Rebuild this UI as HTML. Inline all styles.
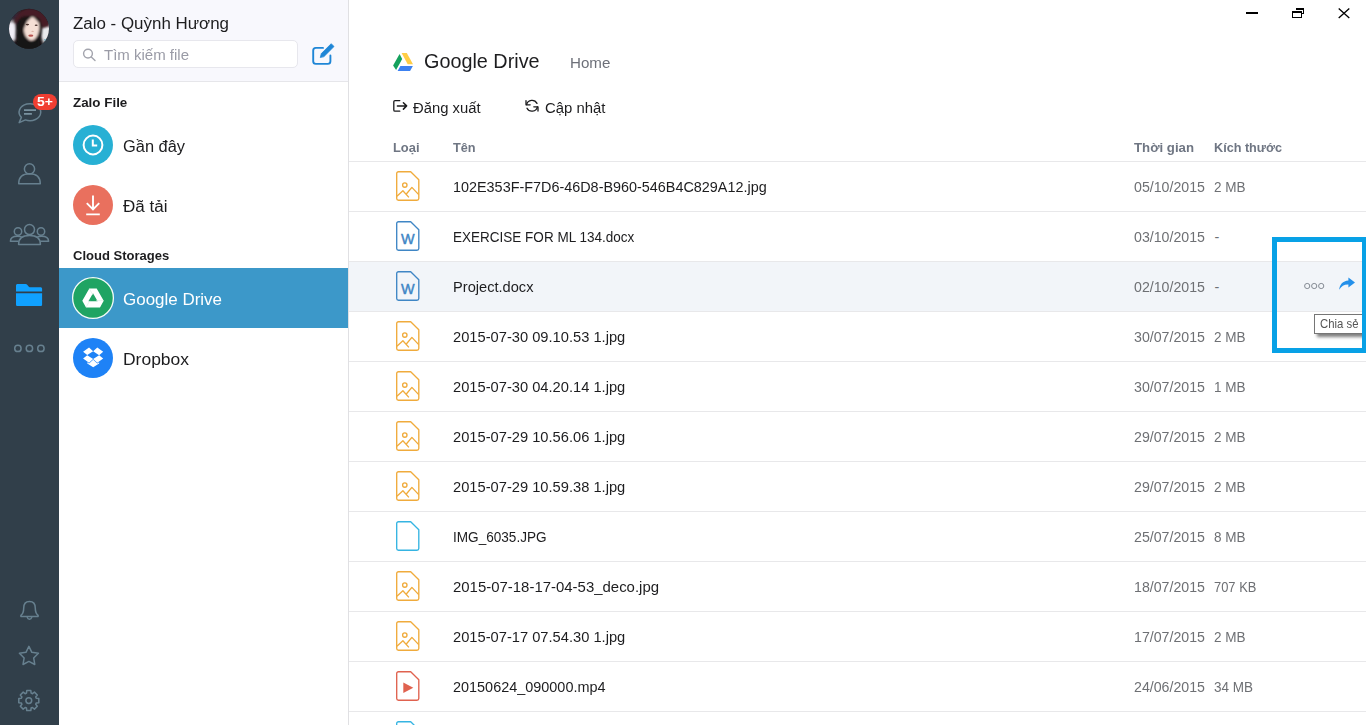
<!DOCTYPE html>
<html lang="vi"><head><meta charset="utf-8"><title>Zalo - Quỳnh Hương</title>
<style>
*{box-sizing:border-box;margin:0;padding:0}
html,body{width:1366px;height:725px;overflow:hidden;background:#fff}
body{font-family:"Liberation Sans",sans-serif}
#app{position:relative;width:1366px;height:725px;overflow:hidden;background:#fff}
#app div,#app span,#app svg{position:absolute}
.g{display:contents}
#app .g{position:static}
.side{left:0;top:0;width:59px;height:725px;background:#313f4a}
.panel{left:59px;top:0;width:289px;height:725px;background:#fff}
.phead{left:59px;top:0;width:289px;height:81px;background:#f8f8fd}
.pline{left:59px;top:81px;width:289px;height:1px;background:#e6e6ea}
.vline{left:348px;top:0;width:1px;height:725px;background:#e0e0e3}
.search{left:73px;top:40px;width:225px;height:28px;background:#fff;border:1px solid #e7e7ed;border-radius:5px}
.sel{left:59px;top:268px;width:289px;height:60px;background:#3c98c9}
.rowhi{left:349px;top:261px;width:1017px;height:50px;background:#f2f5f9}
.hl{left:349px;width:1017px;height:1px;background:#e8e8ea}
.t{white-space:pre;transform-origin:0 0;font-family:"Liberation Sans",sans-serif}
.fi{left:395px}
.badge{left:33px;top:94px;width:24px;height:16px;border-radius:8px;background:#f03e32}
.tip{left:1314px;top:314px;width:52px;height:20px;background:#fff;border:1px solid #767676;box-shadow:3px 3px 3px rgba(0,0,0,.5)}
.hbox{left:1272px;top:237px;width:95px;height:116px;border:5px solid #08a1e6}
svg{overflow:visible}
#ico{left:0;top:0}
</style></head>
<body>
<div id="app">
<div class="side"></div>
<div class="panel"></div>
<div class="phead"></div>
<div class="pline"></div>
<div class="vline"></div>
<div class="search"></div>
<div class="sel"></div>
<div class="rowhi"></div>
<div class="hl" style="top:161px"></div><div class="hl" style="top:211px"></div><div class="hl" style="top:261px"></div><div class="hl" style="top:311px"></div><div class="hl" style="top:361px"></div><div class="hl" style="top:411px"></div><div class="hl" style="top:461px"></div><div class="hl" style="top:511px"></div><div class="hl" style="top:561px"></div><div class="hl" style="top:611px"></div><div class="hl" style="top:661px"></div><div class="hl" style="top:711px"></div>
<svg id="ico" width="1366" height="725" viewBox="0 0 1366 725" fill="none">
<!-- avatar -->
<defs>
<clipPath id="avc"><circle cx="29" cy="28.8" r="20"/></clipPath>
<filter id="b1" x="-50%" y="-50%" width="200%" height="200%"><feGaussianBlur stdDeviation="1.0"/></filter><filter id="b3" x="-50%" y="-50%" width="200%" height="200%"><feGaussianBlur stdDeviation="1.5"/></filter><filter id="b2" x="-50%" y="-50%" width="200%" height="200%"><feGaussianBlur stdDeviation="0.7"/></filter>
</defs>
<g clip-path="url(#avc)">
<rect x="8" y="8" width="42" height="42" fill="#1b1518"/>
<g filter="url(#b3)">
<path d="M6 22L15 21.5L16.5 30L15.5 40L12 42L6 36Z" fill="#f1eff8"/>
<path d="M41 28.5L51 23L52 40L45 46L42.6 41L40.4 36.5Z" fill="#e9eaed"/>
<path d="M8 12L21 8.5L18 19L8 22Z" fill="#33293a"/>
</g>
<g filter="url(#b1)">
<path d="M14 22C16 13 22 8 31 8.4C41 9 48 15 50 26L42.5 27.5C40 20 36 17 30 16.6C24 16.6 19 18 16.5 23Z" fill="#471c26"/>
<path d="M18 22C20 17 25 15.5 31 16C37 16.5 41 20 41.5 27C42 33 40.5 40 39 44L44 50H12L17.6 40C16 34 16.4 27 18 22Z" fill="#191316"/>
<path d="M24.6 20C27 16.4 35.4 16 38.4 19.6C40 23 39.8 30 37.8 35C36 38.8 33.6 40.6 31.4 40.6C28.4 40.4 25.2 37 24.2 32C23.4 27.6 23.6 23 24.6 20Z" fill="#f5dfd5"/>
<path d="M21 17L32.5 16L27 21.4L24.2 28L23.2 38L19 30Z" fill="#1b1417"/>
<path d="M32.5 16L40 19L40.8 29L38.6 22.4Z" fill="#1b1417"/>
<path d="M25 40.4L31 42L38 39.4L40 50H20Z" fill="#191316"/>
</g>
<g filter="url(#b2)">
<ellipse cx="27.4" cy="24.6" rx="1.7" ry="0.8" fill="#4a332f"/>
<ellipse cx="36.2" cy="25.2" rx="1.5" ry="0.8" fill="#4a332f"/>
<ellipse cx="30.8" cy="35.6" rx="2.5" ry="1.2" fill="#b9524f"/>
<ellipse cx="32.6" cy="31.4" rx="1.2" ry="0.6" fill="#dcb4a6"/>
<rect x="44.2" y="39" width="1.8" height="1.8" fill="#7fb4c4"/>
</g>
</g>
<!-- sidebar icons -->
<g stroke="#67808f" stroke-width="1.5" stroke-linejoin="round" stroke-linecap="round">
<path d="M21.4 117.4A10.8 8.5 0 1 1 25.4 119.9L19.2 122.6Z"/>
<path d="M24 110.1H36M24 113.9H31.9" stroke="#7992a0" stroke-width="1.8" stroke-linecap="butt"/>
<circle cx="29.5" cy="168.9" r="5.1"/>
<path d="M18.7 183.8C18.7 177.2 23 173.8 29.5 173.8C36 173.8 40.3 177.2 40.3 183.8Z"/>
<circle cx="29.5" cy="229.6" r="5"/>
<path d="M18.6 244.4C18.6 238.6 23 235.6 29.5 235.6C36 235.6 40.4 238.6 40.4 244.4Z"/>
<circle cx="18" cy="231.5" r="3.7"/>
<circle cx="41" cy="231.5" r="3.7"/>
<path d="M18.2 241.2H10.4C10.4 238 13.4 236.2 17.5 236.2C19.3 236.2 20.8 236.6 21.8 237.2"/>
<path d="M40.8 241.2H48.6C48.6 238 45.6 236.2 41.5 236.2C39.7 236.2 38.2 236.6 37.2 237.2"/>
<circle cx="17.9" cy="348.4" r="3.2"/>
<circle cx="29.4" cy="348.4" r="3.2"/>
<circle cx="40.9" cy="348.4" r="3.2"/>
<!-- bell -->
<path d="M29.5 601.6C25.6 601.6 23.7 604.6 23.7 608.2C23.7 612.6 22.4 614.2 20.9 615.4V616.6H38.1V615.4C36.6 614.2 35.3 612.6 35.3 608.2C35.3 604.6 33.4 601.6 29.5 601.6Z"/>
<path d="M27.3 617.4C27.6 618.6 28.4 619.2 29.5 619.2C30.6 619.2 31.4 618.6 31.7 617.4"/>
<!-- star -->
<path d="M28.90 646.40L31.84 652.35L38.41 653.31L33.66 657.95L34.78 664.49L28.90 661.40L23.02 664.49L24.14 657.95L19.39 653.31L25.96 652.35Z"/>
<!-- gear -->
<circle cx="28.8" cy="700.6" r="2.9"/>
<path d="M26.49 693.15L26.77 690.60L30.83 690.60L31.11 693.15L32.44 693.70L34.44 692.10L37.30 694.96L35.70 696.96L36.25 698.29L38.80 698.57L38.80 702.63L36.25 702.91L35.70 704.24L37.30 706.24L34.44 709.10L32.44 707.50L31.11 708.05L30.83 710.60L26.77 710.60L26.49 708.05L25.16 707.50L23.16 709.10L20.30 706.24L21.90 704.24L21.35 702.91L18.80 702.63L18.80 698.57L21.35 698.29L21.90 696.96L20.30 694.96L23.16 692.10L25.16 693.70Z"/>
</g>
<!-- folder -->
<path d="M17.5 284H25.6C26.3 284 26.8 284.3 27.2 284.8L28.6 286.6C28.9 287 29.4 287.2 29.9 287.2H40.5C41.4 287.2 42.1 287.9 42.1 288.8V291.4H16V285.5C16 284.7 16.7 284 17.5 284Z" fill="#10a1ff"/>
<path d="M16 293.2H42.1V304.4C42.1 305.3 41.4 306 40.5 306H17.6C16.7 306 16 305.3 16 304.4Z" fill="#10a1ff"/>
<!-- search icon -->
<g stroke="#a3a4ad" stroke-width="1.4" stroke-linecap="round">
<circle cx="88" cy="53.6" r="4.4"/>
<path d="M91.3 57L95 60.6"/>
</g>
<!-- compose icon -->
<g stroke="#1f86d6" stroke-width="1.9" stroke-linejoin="round" stroke-linecap="round">
<path d="M323 47.9H315.8C314.3 47.9 313.2 49 313.2 50.5V61.3C313.2 62.8 314.3 63.9 315.8 63.9H327.8C329.3 63.9 330.4 62.8 330.4 61.3V55.4"/>
<path d="M320.4 57.2L321.3 53.6L331.2 43.7L334 46.5L324.1 56.4Z" fill="#1f86d6" stroke-width="0.8"/>
</g>
<!-- panel circles -->
<circle cx="93" cy="145" r="20" fill="#27b0d4"/>
<circle cx="93" cy="145" r="9.4" stroke="#fff" stroke-width="2"/>
<path d="M92.8 139.6V145.6H97.2" stroke="#fff" stroke-width="2"/>
<circle cx="93" cy="205" r="20" fill="#e9705e"/>
<path d="M93 195.6V208.8M86.8 203.2L93 209.4L99.2 203.2M86.2 214.4H99.8" stroke="#fff" stroke-width="1.9"/>
<circle cx="93" cy="298" r="20.4" fill="#1fa463" stroke="#f4fbf8" stroke-width="1.3"/>
<path d="M89.3 288.6H96.7L103.7 300.8L100 307.4H86L82.3 300.8Z M93 293.2L88.4 301.2H97.6Z" fill="#fff" fill-rule="evenodd"/><path d="M89.4 288.8L93 295M103.4 300.6H96M86.2 306.9L89.8 300.8" stroke="#d6eee2" stroke-width="0.6"/>
<circle cx="93" cy="358" r="20" fill="#1e82f6"/>
<path transform="translate(83.1 347.6) scale(0.474 0.5)" fill="#fff" d="M12.5 0L0 8.1l8.7 6.9 12.5-7.8L12.5 0z M0 21.9l12.5 8.2 8.7-7.3-12.5-7.7L0 21.9z M21.2 22.8l8.8 7.3 12.4-8.1-8.6-6.9-12.6 7.7z M42.4 8.1L30 0l-8.8 7.3 12.6 7.8 8.6-7z M21.3 24.4l-8.8 7.3-3.7-2.5v2.8l12.5 7.5 12.5-7.5v-2.8l-3.8 2.5-8.7-7.3z"/>
<!-- drive logo -->
<path d="M401.6 53.1H406.8L413 64.3H407.7Z" fill="#ffcd45"/>
<path d="M399.6 54.1L402.2 59L396.1 69.9L393.1 65.4Z" fill="#14a15d"/>
<path d="M400.4 66.1H412.9L410.1 70.9H397.6Z" fill="#3c81f1"/>
<!-- logout icon -->
<g stroke="#1b1b1d" stroke-width="1.3" stroke-linecap="round" stroke-linejoin="round">
<path d="M399.8 100.6H395C394.3 100.6 393.8 101.1 393.8 101.8V110C393.8 110.7 394.3 111.2 395 111.2H399.8"/>
<path d="M397.4 105.9H406.4M403.4 102.7L406.6 105.9L403.4 109.1" stroke-width="1.5"/>
</g>
<!-- refresh icon -->
<g stroke="#1b1b1d" stroke-width="1.3" stroke-linecap="round" stroke-linejoin="round">
<path d="M526.6 104.6A5.6 5.6 0 0 1 537 103.4"/>
<path d="M537.4 106.8A5.6 5.6 0 0 1 527 108.2"/>
<path d="M526 100.6V104.8H530.2"/>
<path d="M538 111V106.8H533.8"/>
</g>
<!-- window controls -->
<rect x="1246" y="12" width="12" height="2" fill="#000"/>
<rect x="1296" y="8" width="8" height="2" fill="#000"/>
<rect x="1303" y="8" width="1" height="6" fill="#000"/>
<rect x="1302" y="13" width="2" height="1" fill="#000"/>
<rect x="1292" y="11" width="10" height="2" fill="#000"/>
<rect x="1292" y="11" width="1" height="7" fill="#000"/>
<rect x="1301" y="11" width="1" height="7" fill="#000"/>
<rect x="1292" y="17" width="10" height="1" fill="#000"/>
<path d="M1338.7 8.4L1349.3 18M1349.3 8.4L1338.7 18" stroke="#000" stroke-width="1.3"/>
<!-- row actions -->
<g stroke="#858b94" stroke-width="1">
<circle cx="1307.2" cy="286" r="2.6"/>
<circle cx="1314.2" cy="286" r="2.6"/>
<circle cx="1321.2" cy="286" r="2.6"/>
</g>
<path d="M1348.4 277.6L1355 282.6L1348.4 287.6V284.6C1344.4 284.4 1341.4 286 1339.2 289.8C1339.6 284.4 1342.8 280.8 1348.4 280.4Z" fill="#2490ea"/>
</svg>
<svg class="fi" style="top:171px" width="25" height="31" viewBox="-0.5 0 25 31" fill="none" stroke="#f0ab3c" stroke-width="1.35" stroke-linejoin="round"><path d="M3 0.7H15.2L23.3 8.8V27.4C23.3 28.4 22.5 29.2 21.5 29.2H3C2 29.2 1.2 28.4 1.2 27.4V2.5C1.2 1.5 2 0.7 3 0.7Z"/><circle cx="9.3" cy="14" r="2.2"/><path d="M1.4 25.2L7.4 19.8L13.4 26.4M10.6 23.2L16.4 16.4L23.2 23.6"/></svg><svg class="fi" style="top:221px" width="25" height="31" viewBox="-0.5 0 25 31" fill="none" stroke="#3f86c5" stroke-width="1.35" stroke-linejoin="round"><path d="M3 0.7H15.2L23.3 8.8V27.4C23.3 28.4 22.5 29.2 21.5 29.2H3C2 29.2 1.2 28.4 1.2 27.4V2.5C1.2 1.5 2 0.7 3 0.7Z"/><text x="12.3" y="22.6" text-anchor="middle" font-family="Liberation Sans, sans-serif" font-size="14.4" fill="#3f86c5" stroke="#3f86c5" stroke-width="0.45">W</text></svg><svg class="fi" style="top:271px" width="25" height="31" viewBox="-0.5 0 25 31" fill="none" stroke="#3f86c5" stroke-width="1.35" stroke-linejoin="round"><path d="M3 0.7H15.2L23.3 8.8V27.4C23.3 28.4 22.5 29.2 21.5 29.2H3C2 29.2 1.2 28.4 1.2 27.4V2.5C1.2 1.5 2 0.7 3 0.7Z"/><text x="12.3" y="22.6" text-anchor="middle" font-family="Liberation Sans, sans-serif" font-size="14.4" fill="#3f86c5" stroke="#3f86c5" stroke-width="0.45">W</text></svg><svg class="fi" style="top:321px" width="25" height="31" viewBox="-0.5 0 25 31" fill="none" stroke="#f0ab3c" stroke-width="1.35" stroke-linejoin="round"><path d="M3 0.7H15.2L23.3 8.8V27.4C23.3 28.4 22.5 29.2 21.5 29.2H3C2 29.2 1.2 28.4 1.2 27.4V2.5C1.2 1.5 2 0.7 3 0.7Z"/><circle cx="9.3" cy="14" r="2.2"/><path d="M1.4 25.2L7.4 19.8L13.4 26.4M10.6 23.2L16.4 16.4L23.2 23.6"/></svg><svg class="fi" style="top:371px" width="25" height="31" viewBox="-0.5 0 25 31" fill="none" stroke="#f0ab3c" stroke-width="1.35" stroke-linejoin="round"><path d="M3 0.7H15.2L23.3 8.8V27.4C23.3 28.4 22.5 29.2 21.5 29.2H3C2 29.2 1.2 28.4 1.2 27.4V2.5C1.2 1.5 2 0.7 3 0.7Z"/><circle cx="9.3" cy="14" r="2.2"/><path d="M1.4 25.2L7.4 19.8L13.4 26.4M10.6 23.2L16.4 16.4L23.2 23.6"/></svg><svg class="fi" style="top:421px" width="25" height="31" viewBox="-0.5 0 25 31" fill="none" stroke="#f0ab3c" stroke-width="1.35" stroke-linejoin="round"><path d="M3 0.7H15.2L23.3 8.8V27.4C23.3 28.4 22.5 29.2 21.5 29.2H3C2 29.2 1.2 28.4 1.2 27.4V2.5C1.2 1.5 2 0.7 3 0.7Z"/><circle cx="9.3" cy="14" r="2.2"/><path d="M1.4 25.2L7.4 19.8L13.4 26.4M10.6 23.2L16.4 16.4L23.2 23.6"/></svg><svg class="fi" style="top:471px" width="25" height="31" viewBox="-0.5 0 25 31" fill="none" stroke="#f0ab3c" stroke-width="1.35" stroke-linejoin="round"><path d="M3 0.7H15.2L23.3 8.8V27.4C23.3 28.4 22.5 29.2 21.5 29.2H3C2 29.2 1.2 28.4 1.2 27.4V2.5C1.2 1.5 2 0.7 3 0.7Z"/><circle cx="9.3" cy="14" r="2.2"/><path d="M1.4 25.2L7.4 19.8L13.4 26.4M10.6 23.2L16.4 16.4L23.2 23.6"/></svg><svg class="fi" style="top:521px" width="25" height="31" viewBox="-0.5 0 25 31" fill="none" stroke="#35b4e2" stroke-width="1.35" stroke-linejoin="round"><path d="M3 0.7H15.2L23.3 8.8V27.4C23.3 28.4 22.5 29.2 21.5 29.2H3C2 29.2 1.2 28.4 1.2 27.4V2.5C1.2 1.5 2 0.7 3 0.7Z"/></svg><svg class="fi" style="top:571px" width="25" height="31" viewBox="-0.5 0 25 31" fill="none" stroke="#f0ab3c" stroke-width="1.35" stroke-linejoin="round"><path d="M3 0.7H15.2L23.3 8.8V27.4C23.3 28.4 22.5 29.2 21.5 29.2H3C2 29.2 1.2 28.4 1.2 27.4V2.5C1.2 1.5 2 0.7 3 0.7Z"/><circle cx="9.3" cy="14" r="2.2"/><path d="M1.4 25.2L7.4 19.8L13.4 26.4M10.6 23.2L16.4 16.4L23.2 23.6"/></svg><svg class="fi" style="top:621px" width="25" height="31" viewBox="-0.5 0 25 31" fill="none" stroke="#f0ab3c" stroke-width="1.35" stroke-linejoin="round"><path d="M3 0.7H15.2L23.3 8.8V27.4C23.3 28.4 22.5 29.2 21.5 29.2H3C2 29.2 1.2 28.4 1.2 27.4V2.5C1.2 1.5 2 0.7 3 0.7Z"/><circle cx="9.3" cy="14" r="2.2"/><path d="M1.4 25.2L7.4 19.8L13.4 26.4M10.6 23.2L16.4 16.4L23.2 23.6"/></svg><svg class="fi" style="top:671px" width="25" height="31" viewBox="-0.5 0 25 31" fill="none" stroke="#e0624f" stroke-width="1.35" stroke-linejoin="round"><path d="M3 0.7H15.2L23.3 8.8V27.4C23.3 28.4 22.5 29.2 21.5 29.2H3C2 29.2 1.2 28.4 1.2 27.4V2.5C1.2 1.5 2 0.7 3 0.7Z"/><path d="M7.8 11.6L17.8 16.8L7.8 22Z" fill="#e0624f" stroke="none"/></svg><svg class="fi" style="top:721px" width="25" height="31" viewBox="-0.5 0 25 31" fill="none" stroke="#35b4e2" stroke-width="1.35" stroke-linejoin="round"><path d="M3 0.7H15.2L23.3 8.8V27.4C23.3 28.4 22.5 29.2 21.5 29.2H3C2 29.2 1.2 28.4 1.2 27.4V2.5C1.2 1.5 2 0.7 3 0.7Z"/></svg>
<nav class="g sidebar">
<div class="badge"></div>
<span class="t" style="left:37.20px;top:94px;font-size:12px;line-height:16px;color:#ffffff;font-weight:700;transform:scaleX(1.1616);">5+</span>
</nav>
<aside class="g filepanel">
<span class="t" style="left:73.00px;top:12px;font-size:17.3px;line-height:22px;color:#1d1d1f;transform:scaleX(0.9793);">Zalo - Quỳnh Hương</span>
<span class="t" style="left:104.40px;top:45px;font-size:15.5px;line-height:20px;color:#9a9ba6;transform:scaleX(0.9676);">Tìm kiếm file</span>
<span class="t" style="left:73.00px;top:94px;font-size:13.3px;line-height:17px;color:#1d1d1f;font-weight:700;transform:scaleX(1.0067);">Zalo File</span>
<span class="t" style="left:123.00px;top:135px;font-size:17.3px;line-height:22px;color:#1d1d1f;transform:scaleX(0.9491);">Gần đây</span>
<span class="t" style="left:123.30px;top:195px;font-size:17.3px;line-height:22px;color:#1d1d1f;transform:scaleX(0.9855);">Đã tải</span>
<span class="t" style="left:73.00px;top:247px;font-size:13.3px;line-height:17px;color:#1d1d1f;font-weight:700;transform:scaleX(0.9800);">Cloud Storages</span>
<span class="t" style="left:123.00px;top:288px;font-size:17.3px;line-height:22px;color:#ffffff;transform:scaleX(0.9816);">Google Drive</span>
<span class="t" style="left:123.00px;top:348px;font-size:17.3px;line-height:22px;color:#1d1d1f;transform:scaleX(1.0103);">Dropbox</span>
</aside>
<main class="g content">
<header class="g">
<span class="t" style="left:424.00px;top:48px;font-size:20.2px;line-height:26px;color:#1d1d1f;transform:scaleX(0.9811);">Google Drive</span>
<span class="t" style="left:570.00px;top:53px;font-size:15.5px;line-height:20px;color:#6d7079;transform:scaleX(0.9768);">Home</span>
<span class="t" style="left:413.30px;top:98px;font-size:15.5px;line-height:20px;color:#1d1d1f;transform:scaleX(0.9565);">Đăng xuất</span>
<span class="t" style="left:545.20px;top:98px;font-size:15.5px;line-height:20px;color:#1d1d1f;transform:scaleX(0.9599);">Cập nhật</span>
</header>
<section class="g filelist">
<div class="g listhead">
<span class="t" style="left:393.30px;top:139px;font-size:13.3px;line-height:17px;color:#6f7683;font-weight:700;transform:scaleX(0.9691);">Loại</span>
<span class="t" style="left:453.00px;top:139px;font-size:13.3px;line-height:17px;color:#6f7683;font-weight:700;transform:scaleX(0.9560);">Tên</span>
<span class="t" style="left:1134.40px;top:139px;font-size:13.3px;line-height:17px;color:#6f7683;font-weight:700;transform:scaleX(0.9930);">Thời gian</span>
<span class="t" style="left:1214.30px;top:139px;font-size:13.3px;line-height:17px;color:#6f7683;font-weight:700;transform:scaleX(0.9504);">Kích thước</span>
</div>
<div class="g row">
<span class="t" style="left:453.20px;top:177px;font-size:15.5px;line-height:20px;color:#1d1d1f;transform:scaleX(0.9287);">102E353F-F7D6-46D8-B960-546B4C829A12.jpg</span>
<span class="t" style="left:1134.30px;top:178px;font-size:14.4px;line-height:19px;color:#6e7074;transform:scaleX(0.9857);">05/10/2015</span>
<span class="t" style="left:1214.40px;top:178px;font-size:14.4px;line-height:19px;color:#6e7074;transform:scaleX(0.9407);">2 MB</span>
</div>
<div class="g row">
<span class="t" style="left:453.20px;top:227px;font-size:15.5px;line-height:20px;color:#1d1d1f;transform:scaleX(0.8721);">EXERCISE FOR ML 134.docx</span>
<span class="t" style="left:1134.30px;top:228px;font-size:14.4px;line-height:19px;color:#6e7074;transform:scaleX(0.9857);">03/10/2015</span>
<span class="t" style="left:1214.40px;top:228px;font-size:14.4px;line-height:19px;color:#6e7074;">-</span>
</div>
<div class="g row">
<span class="t" style="left:453.20px;top:277px;font-size:15.5px;line-height:20px;color:#1d1d1f;transform:scaleX(0.9438);">Project.docx</span>
<span class="t" style="left:1134.30px;top:278px;font-size:14.4px;line-height:19px;color:#6e7074;transform:scaleX(0.9857);">02/10/2015</span>
<span class="t" style="left:1214.40px;top:278px;font-size:14.4px;line-height:19px;color:#6e7074;">-</span>
</div>
<div class="g row">
<span class="t" style="left:453.20px;top:327px;font-size:15.5px;line-height:20px;color:#1d1d1f;transform:scaleX(0.9474);">2015-07-30 09.10.53 1.jpg</span>
<span class="t" style="left:1134.30px;top:328px;font-size:14.4px;line-height:19px;color:#6e7074;transform:scaleX(0.9857);">30/07/2015</span>
<span class="t" style="left:1214.40px;top:328px;font-size:14.4px;line-height:19px;color:#6e7074;transform:scaleX(0.9407);">2 MB</span>
</div>
<div class="g row">
<span class="t" style="left:453.20px;top:377px;font-size:15.5px;line-height:20px;color:#1d1d1f;transform:scaleX(0.9474);">2015-07-30 04.20.14 1.jpg</span>
<span class="t" style="left:1134.30px;top:378px;font-size:14.4px;line-height:19px;color:#6e7074;transform:scaleX(0.9857);">30/07/2015</span>
<span class="t" style="left:1214.40px;top:378px;font-size:14.4px;line-height:19px;color:#6e7074;transform:scaleX(0.9407);">1 MB</span>
</div>
<div class="g row">
<span class="t" style="left:453.20px;top:427px;font-size:15.5px;line-height:20px;color:#1d1d1f;transform:scaleX(0.9474);">2015-07-29 10.56.06 1.jpg</span>
<span class="t" style="left:1134.30px;top:428px;font-size:14.4px;line-height:19px;color:#6e7074;transform:scaleX(0.9857);">29/07/2015</span>
<span class="t" style="left:1214.40px;top:428px;font-size:14.4px;line-height:19px;color:#6e7074;transform:scaleX(0.9407);">2 MB</span>
</div>
<div class="g row">
<span class="t" style="left:453.20px;top:477px;font-size:15.5px;line-height:20px;color:#1d1d1f;transform:scaleX(0.9474);">2015-07-29 10.59.38 1.jpg</span>
<span class="t" style="left:1134.30px;top:478px;font-size:14.4px;line-height:19px;color:#6e7074;transform:scaleX(0.9857);">29/07/2015</span>
<span class="t" style="left:1214.40px;top:478px;font-size:14.4px;line-height:19px;color:#6e7074;transform:scaleX(0.9407);">2 MB</span>
</div>
<div class="g row">
<span class="t" style="left:453.20px;top:527px;font-size:15.5px;line-height:20px;color:#1d1d1f;transform:scaleX(0.8762);">IMG_6035.JPG</span>
<span class="t" style="left:1134.30px;top:528px;font-size:14.4px;line-height:19px;color:#6e7074;transform:scaleX(0.9857);">25/07/2015</span>
<span class="t" style="left:1214.40px;top:528px;font-size:14.4px;line-height:19px;color:#6e7074;transform:scaleX(0.9407);">8 MB</span>
</div>
<div class="g row">
<span class="t" style="left:453.20px;top:577px;font-size:15.5px;line-height:20px;color:#1d1d1f;transform:scaleX(0.9639);">2015-07-18-17-04-53_deco.jpg</span>
<span class="t" style="left:1134.30px;top:578px;font-size:14.4px;line-height:19px;color:#6e7074;transform:scaleX(0.9857);">18/07/2015</span>
<span class="t" style="left:1214.40px;top:578px;font-size:14.4px;line-height:19px;color:#6e7074;transform:scaleX(0.8979);">707 KB</span>
</div>
<div class="g row">
<span class="t" style="left:453.20px;top:627px;font-size:15.5px;line-height:20px;color:#1d1d1f;transform:scaleX(0.9474);">2015-07-17 07.54.30 1.jpg</span>
<span class="t" style="left:1134.30px;top:628px;font-size:14.4px;line-height:19px;color:#6e7074;transform:scaleX(0.9857);">17/07/2015</span>
<span class="t" style="left:1214.40px;top:628px;font-size:14.4px;line-height:19px;color:#6e7074;transform:scaleX(0.9407);">2 MB</span>
</div>
<div class="g row">
<span class="t" style="left:453.20px;top:677px;font-size:15.5px;line-height:20px;color:#1d1d1f;transform:scaleX(0.9312);">20150624_090000.mp4</span>
<span class="t" style="left:1134.30px;top:678px;font-size:14.4px;line-height:19px;color:#6e7074;transform:scaleX(0.9857);">24/06/2015</span>
<span class="t" style="left:1214.40px;top:678px;font-size:14.4px;line-height:19px;color:#6e7074;transform:scaleX(0.9376);">34 MB</span>
</div>
</section>
</main>
<div class="tip"></div>
<span class="t" style="left:1319.80px;top:316px;font-size:12.2px;line-height:16px;color:#555555;transform:scaleX(0.9316);">Chia sẻ</span>
<div class="hbox"></div>
</div>
</body></html>
